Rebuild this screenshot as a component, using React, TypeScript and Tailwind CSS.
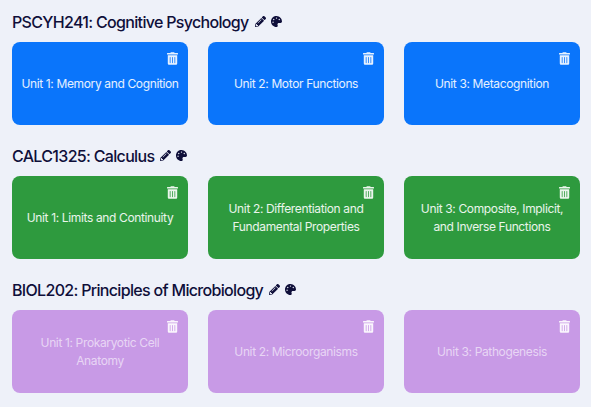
import React from 'react';
import { FaPalette, FaPencilAlt, FaTrashAlt } from 'react-icons/fa';

type Course = {
  title: string;
  cardClass: string;
  units: string[];
};

const courses: Course[] = [
  {
    title: 'PSCYH241: Cognitive Psychology',
    cardClass: 'bg-[#0a75fb] text-white/90',
    units: ['Unit 1: Memory and Cognition', 'Unit 2: Motor Functions', 'Unit 3: Metacognition'],
  },
  {
    title: 'CALC1325: Calculus',
    cardClass: 'bg-[#2e9a3e] text-white/90',
    units: [
      'Unit 1: Limits and Continuity',
      'Unit 2: Differentiation and Fundamental Properties',
      'Unit 3: Composite, Implicit, and Inverse Functions',
    ],
  },
  {
    title: 'BIOL202: Principles of Microbiology',
    cardClass: 'bg-[#c89ae6] text-white/60',
    units: ['Unit 1: Prokaryotic Cell Anatomy', 'Unit 2: Microorganisms', 'Unit 3: Pathogenesis'],
  },
];

export default function App() {
  return (
    <div className="h-[407px] w-[591px] overflow-hidden bg-[#eef1f9] pl-3 pr-[11px] pt-[10px] font-['Inter',sans-serif]">
      {courses.map((course) => (
        <section key={course.title} className="mb-[19px]">
          <div className="flex h-[23px] items-center text-[#0f0f3a]">
            <h2 className="text-[16px] font-medium tracking-[-0.68px]">{course.title}</h2>
            <FaPencilAlt className="ml-[6px] h-[11px] w-[11px]" />
            <FaPalette className="ml-[5px] h-[11px] w-[11px]" />
          </div>
          <div className="mt-[9px] grid grid-cols-3 gap-5">
            {course.units.map((unit) => (
              <div
                key={unit}
                className={`relative flex h-[83px] items-center justify-center rounded-lg px-[6px] text-center text-[12px] leading-[18px] tracking-[-0.36px] ${course.cardClass}`}
              >
                <FaTrashAlt className="absolute right-[10px] top-[10px] h-[13px] w-[11px] text-white/90" />
                <span>{unit}</span>
              </div>
            ))}
          </div>
        </section>
      ))}
    </div>
  );
}
